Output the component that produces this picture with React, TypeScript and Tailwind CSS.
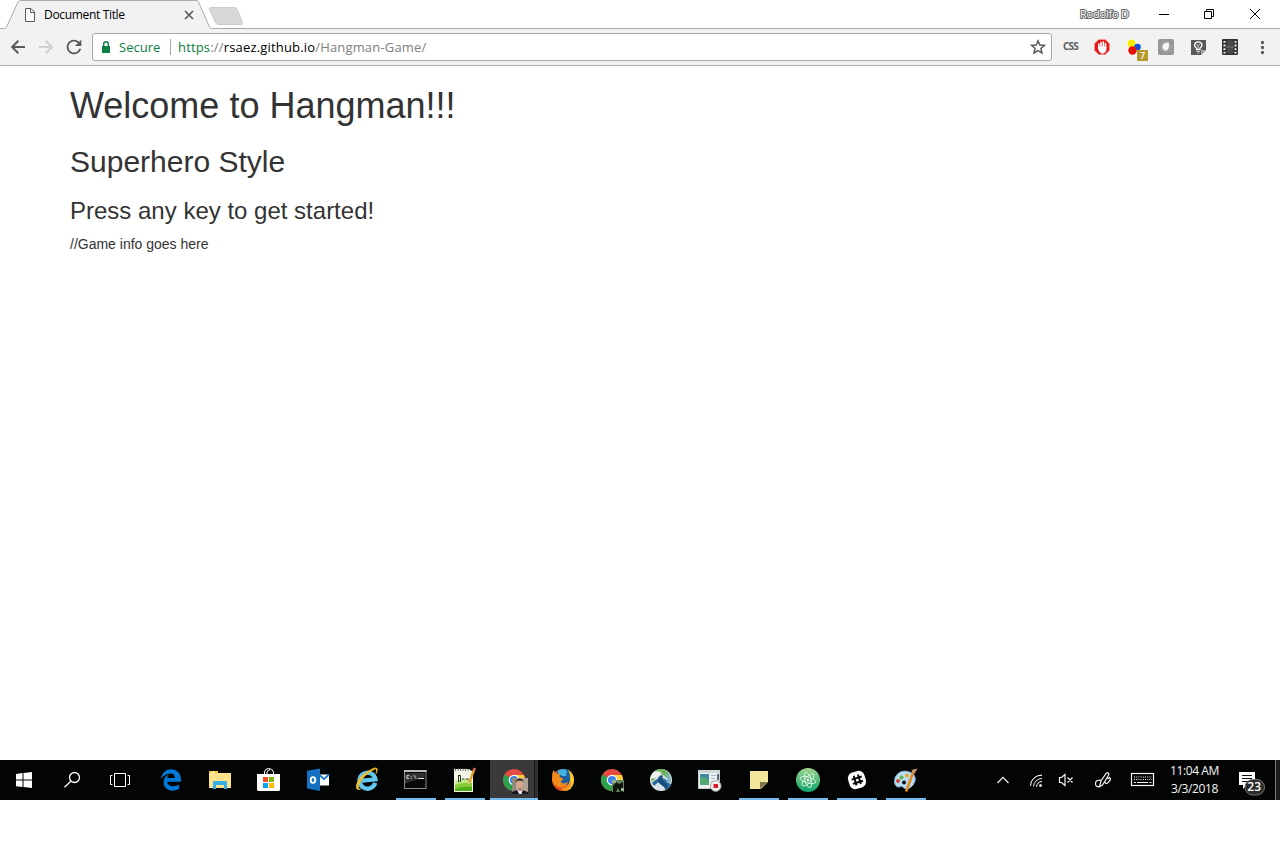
import type { ReactNode } from "react";
import { FaEdgeLegacy } from "react-icons/fa";
import { MdRefresh, MdMoreVert } from "react-icons/md";

function TitleBar() {
  return (
    <header className="relative flex h-[29px] items-center bg-white">
      <svg className="absolute left-0 top-0" width="1280" height="29" viewBox="0 0 1280 29">
        <path d="M0 28.5H4.5Q6 28.2 7 26L17.5 3Q18.5 .5 20.5 .5H196Q198 .5 199 3L209 26Q210 28.500 211.500 28.500H1280V30H0Z" fill="#f2f2f2" stroke="#a9a9a9" />
        <path d="M210.500 7.500H234.500Q236.500 7.500 237.200 9.300L242.500 22.500Q243 24.500 241 24.500H218.500Q216.500 24.500 215.500 22.500L209.500 9.500Q209 7.800 210.500 7.500Z" fill="#d8d8d8" stroke="#cacaca" />
      </svg>
      <div className="relative flex h-full w-[244px] items-center pl-6">
        <svg width="12" height="14" viewBox="0 0 12 14" fill="#fafafa" stroke="#5a5a5a">
          <path d="M1.500 .5H7L10.500 4V13.500H1.500ZM6.500 .5V4.500H10.500" />
        </svg>
        <span className="ml-2 w-[140px] whitespace-nowrap font-['Open_Sans','Noto_Sans',sans-serif] text-[12px] leading-4 tracking-[-0.33px] text-black">Document Title</span>
        <svg width="10" height="10" viewBox="0 0 10 10" stroke="#5a5a5a" strokeWidth="1.700">
          <path d="M1 1L9 9M9 1L1 9" />
        </svg>
      </div>
      <div className="relative ml-auto flex h-full items-center">
        <span className="mr-[7px] w-[67px] -translate-y-px whitespace-nowrap font-['Open_Sans','Noto_Sans',sans-serif] text-[11px] leading-4 tracking-[-0.2px] text-white [-webkit-text-stroke:2px_#666] [paint-order:stroke_fill]">Rodolfo D</span>
        <svg width="126" height="28" viewBox="1154 0 126 28" fill="none" stroke="#000">
          <path d="M1159 13.500H1169M1204.500 10.500H1211.500V17.500H1204.500ZM1206.500 10.500V8.500H1213.500V15.500H1211.500M1250 8L1260 18M1260 8L1250 18" />
        </svg>
      </div>
    </header>
  );
}

function Extensions() {
  return (
    <div className="flex h-[37px] items-center">
      <span className="w-9 pl-[11px] pb-[2px] font-['Noto_Sans','Open_Sans',sans-serif] text-[10px] leading-4 font-bold tracking-[-0.9px] text-[#606060]">CSS</span>
      <svg width="192" height="37" viewBox="1088 29 192 37">
        <path d="M1098.700 39.500H1105.300L1109.500 43.700V50.300L1105.300 54.500H1098.700L1094.500 50.300V43.700Z" fill="#e61818" stroke="#f29b9b" strokeWidth=".7" />
        <path d="M1098.800 44V47M1101 42.500V47M1103.300 42V47M1105.500 43.500V48" stroke="#fff" strokeWidth="1.600" strokeLinecap="round" />
        <path d="M1098 46.500H1106.300V50Q1106 53 1103.500 53.500H1101.500Q1099 52 1098 49Z" fill="#fff" />
        <circle cx="1131.500" cy="43.500" r="3.900" fill="#f8ed00" />
        <circle cx="1137.500" cy="47" r="3.300" fill="#1251df" />
        <circle cx="1132.500" cy="50.500" r="4.200" fill="#e91105" />
        <rect x="1137" y="50" width="11" height="11" rx="1" fill="#b5992c" />
        <text x="1139.900" y="58.800" fill="#fff" fontFamily="Noto Sans" fontWeight="500" fontSize="9">7</text>
        <defs>
          <radialGradient id="gray"><stop stopColor="#aaa" /><stop offset="1" stopColor="#969696" /></radialGradient>
        </defs>
        <rect x="1158" y="39" width="16" height="16" rx="2" fill="url(#gray)" />
        <path d="M1163 49Q1161 45 1165 43Q1167 42 1169 43Q1170 48 1166 51Z" fill="#f5f5f5" />
        <path d="M1191 40H1206V50L1201 55H1191Z" fill="#595959" />
        <path d="M1206 50H1201V55Z" fill="#aaa" />
        <path d="M1196.500 49.500V48Q1194.500 46.800 1194.500 44.500A4 4 0 0 1 1202 44.500Q1202 46.800 1200 48V49.500Z" fill="#595959" stroke="#fff" strokeWidth="1.300" />
        <path d="M1196.500 51.500H1200M1197.200 53H1199.300M1196.500 43.800L1198.200 46L1200 43.800M1198.200 46V49" stroke="#ddd" strokeWidth=".8" fill="none" />
        <rect x="1222" y="39" width="16" height="16" rx="1" fill="#333" />
        <rect x="1227" y="40.500" width="6" height="13" fill="#4b4b4b" />
        <path d="M1224.500 41V54M1235.500 41V54" stroke="#eee" strokeWidth="2" strokeDasharray="1.800 1.800" />
        <path d="M1226 47H1234" stroke="#777" />
        <MdMoreVert x="1252.500" y="37.500" size="20" color="#5a5a5a" />
      </svg>
    </div>
  );
}

function Toolbar() {
  return (
    <div className="flex h-[37px] items-center border-b border-[#b6b4b6] bg-[#f2f2f2]">
      <svg className="ml-2 size-5 text-[#5a5a5a]" viewBox="0 0 20 20" fill="none" stroke="currentColor" strokeWidth="2">
        <path d="M17 10H4.500M10.300 3.800L4.100 10L10.300 16.200" />
      </svg>
      <svg className="ml-2 size-5 text-[#d0d0d0]" viewBox="0 0 20 20" fill="none" stroke="currentColor" strokeWidth="2">
        <path d="M3 10H15.500M9.700 3.800L15.900 10L9.700 16.200" />
      </svg>
      <MdRefresh className="ml-[7px] size-[22px] text-[#5a5a5a]" />
      <div className="ml-[7px] flex h-7 w-[960px] items-center rounded-[3px] border border-[#a9a9a9] bg-white font-['Open_Sans','Noto_Sans',sans-serif] text-[13px] leading-5">
        <svg className="ml-2" width="10" height="14" viewBox="0 0 10 14">
          <path d="M1 6H9V13H1Z" fill="#0b8043" />
          <path d="M2.700 6V4Q2.700 1.700 5 1.700Q7.300 1.700 7.300 4V6" fill="none" stroke="#0b8043" strokeWidth="1.400" />
        </svg>
        <span className="ml-2 w-[51px] text-[#0b8043]">Secure</span>
        <span className="h-4 w-px bg-[#a9a9a9]" />
        <span className="ml-[7px] whitespace-nowrap tracking-[0.17px] text-black">
          <span className="text-[#0b8043]">https</span><span className="text-[#808080]">://</span>rsaez.github.io<span className="text-[#808080]">/Hangman-Game/</span>
        </span>
        <svg className="ml-auto mr-[4px] size-[18px]" viewBox="0 0 18 18" fill="none" stroke="#5a5a5a" strokeWidth="1.500">
          <path d="M9 2.800L10.800 7L15.400 7.400L11.900 10.400L13 14.900L9 12.500L5 14.900L6.100 10.400L2.600 7.400L7.200 7Z" />
        </svg>
      </div>
      <Extensions />
    </div>
  );
}

function ChromeLogo() {
  return (
    <g>
      <circle cx="24" cy="20" r="11" fill="#e34b3f" />
      <path d="M24 20L14.500 14.500A11 11 0 0 0 24 31L29 23Z" fill="#2ba14b" />
      <path d="M24 15H33.800A11 11 0 0 1 24 31L29 22Z" fill="#fbd13b" />
      <circle cx="24" cy="20" r="5.300" fill="#fff" />
      <circle cx="24" cy="20" r="4.100" fill="#4285e8" />
    </g>
  );
}

type App = { name: string; open?: boolean; active?: boolean; art: ReactNode };

const apps: App[] = [
  { name: "edge", art: <FaEdgeLegacy x="13" y="9" size="22" color="#0078d7" /> },
  {
    name: "explorer",
    art: (
      <g>
        <path d="M13 11H21L22 13H35V28H13Z" fill="#ffe28c" />
        <path d="M13 11H22V13H13Z" fill="#f7c51e" />
        <path d="M15 11.500H19V13H15Z" fill="#fff1bc" />
        <path d="M17 29V22Q17 21 18 21H30Q31 21 31 22V29H28V25H20V29Z" fill="#35afe5" />
      </g>
    ),
  },
  {
    name: "store",
    art: (
      <g>
        <path d="M12 14H35V30L34 31H13L12 30Z" fill="#fff" />
        <path d="M19.500 14V12Q20 8.500 23.500 8.500Q27.500 8.500 28.500 12V14M22 14V12Q22.500 10 25 9.500" fill="none" stroke="#fff" strokeWidth="1" />
        <path d="M18 17H23V22H18Z" fill="#f25022" />
        <path d="M24 17H29V22H24Z" fill="#7fba00" />
        <path d="M18 23H23V28H18Z" fill="#00a4ef" />
        <path d="M24 23H29V28H24Z" fill="#ffb900" />
      </g>
    ),
  },
  {
    name: "outlook",
    art: (
      <g>
        <path d="M26 14.500H35V25.500H26Z" fill="#fff" />
        <path d="M26 15.500L30 19L35 14.500" fill="none" stroke="#1976c4" strokeWidth="1.700" />
        <path d="M13 10.700L26 8.500V31L13 28.500Z" fill="#1670c2" />
        <ellipse cx="19" cy="20" rx="2.300" ry="2.900" fill="none" stroke="#fff" strokeWidth="1.900" />
      </g>
    ),
  },
  {
    name: "ie",
    art: (
      <g>
        <path d="M31 22.500A8 8 0 1 1 31.500 19H18" fill="none" stroke="#60c7f1" strokeWidth="4.300" transform="translate(1 1) rotate(-5 24 20)" />
        <path d="M33 13.500Q35 10 34 8.500Q32 6.500 24 12Q15 18 13.500 25Q12.500 31 17.500 29Q14 30 16 24Q20 16 29 10.500Q33 8 33.500 9Q34 10 33 13.500Z" fill="#f7c52c" stroke="#efb725" strokeWidth=".8" />
      </g>
    ),
  },
  {
    name: "terminal",
    open: true,
    art: (
      <g>
        <rect x="12.500" y="10.500" width="21.500" height="18" fill="#080808" stroke="#8c8c8c" />
        <path d="M12 10H34.500V12H12Z" fill="#bcbcbc" />
        <path d="M13 13H34V17Q24 19 13 24Z" fill="#303030" />
        <text x="14" y="18.500" fill="#eee" fontFamily="Liberation Mono" fontWeight="bold" fontSize="6">C:\</text>
        <path d="M26 18.500H32" stroke="#ddd" />
      </g>
    ),
  },
  {
    name: "editor",
    open: true,
    art: (
      <g>
        <path d="M13 9H28L32 12V32H13Z" fill="#f3f6e9" />
        <path d="M14 21Q22 18 31 19V31H14Z" fill="#c5e889" />
        <path d="M14 25Q22 22 31 23V31H14Z" fill="#83cc38" />
        <path d="M14 29Q23 26 31 27V31H14Z" fill="#4faf18" />
        <path d="M14.500 8.500V11M17 8.500V11M19.500 8.500V11M22 8.500V11M24.500 8.500V11M27 9V11" stroke="#777" />
        <path d="M17.500 15V22.500M17.500 15.500H19.500V22M21 19H23.500M25 19H27.500" stroke="#24331f" fill="none" />
        <path d="M33 10L28 23" stroke="#e0a02a" strokeWidth="2.400" />
        <path d="M33.800 8L33 10.500" stroke="#d8664d" strokeWidth="2.600" />
        <path d="M27 22L27.200 25L29 23Z" fill="#eed3a1" />
      </g>
    ),
  },
  {
    name: "chrome",
    open: true,
    active: true,
    art: (
      <g>
        <ChromeLogo />
        <rect x="22" y="18" width="16" height="16" fill="#b0a294" />
        <path d="M22 18H26V34H22Z" fill="#94887a" />
        <ellipse cx="29.700" cy="24" rx="3.500" ry="5" fill="#d3a68b" />
        <path d="M26 23Q25 18.500 30 18.500Q34 19 33.300 23L32.500 20.800H27Z" fill="#372b25" />
        <path d="M28 28H32V31H28Z" fill="#b98570" />
        <path d="M22 34V32L27 30L30 34L32 30L38 32V34Z" fill="#17191d" />
        <path d="M27 29L29 31H31L33 29L31.500 34H29Z" fill="#eee" />
      </g>
    ),
  },
  {
    name: "firefox",
    art: (
      <g>
        <circle cx="24" cy="20" r="11" fill="#e8641b" />
        <path d="M18 11Q24 7 30 10L32 15L31 24L24 26L18 20Z" fill="#1b5f9f" />
        <path d="M19 10.500Q25 8 28 11L27 16H23L19 13Z" fill="#45b3df" />
        <path d="M29 9.500Q35.500 14 35 21Q34 31 24 31Q30 28 31 21Q32 15 29 9.500Z" fill="#fbc928" />
        <path d="M14.500 10L17.500 14Q20 13 21 14Q20 17 21.500 17.500L25 19L22.500 20.500L22 22.500Q25 24.500 29 22Q27 27 22 27Q16 27 13.500 21Q12.300 15 14.500 10Z" fill="#f58a1c" />
        <path d="M13.500 22Q17 28 23 29Q28 29 31 25Q29 31 22.500 30.800Q16 29.500 13.500 22Z" fill="#dc4318" />
        <path d="M22 29Q29 28 31 21Q35 26 28.500 30Q25 31.500 22 29Z" fill="#f3981f" />
      </g>
    ),
  },
  {
    name: "chrome-profile",
    art: (
      <g>
        <ChromeLogo />
        <rect x="24" y="20" width="12" height="12" fill="#66825d" />
        <path d="M25 32V26L28 22L31 24L35 22V32H32L30 28L28 32Z" fill="#101510" />
        <path d="M24 20H28V23H24ZM33 28H36V31H33Z" fill="#9caf91" />
      </g>
    ),
  },
  {
    name: "vpn",
    art: (
      <g>
        <circle cx="24" cy="20" r="11" fill="#dce3e8" />
        <path d="M18 11Q25 7 30 11.500Q34 15 34 22Q28 16 23 13L15 22L13.500 17Q20 12 18 11Z" fill="#6bb15a" />
        <path d="M17 12Q21 10 25 13L18 18L13.300 19Q13.500 15 17 12Z" fill="#eef2f3" />
        <path d="M15 23Q20 18 25 18Q30 19 34.500 25L32 28Q29 22 26 21Q22 21 17 26Z" fill="#2a6ba0" />
        <path d="M24 15Q18 19 23 24Q27 26 28.500 30L31.500 28Q31 23 27 21Q24 20 26 16Z" fill="#174f83" />
        <path d="M28 14Q32 18 29 22L33 24Q35 20 32 15Z" fill="#7eb8cf" />
      </g>
    ),
  },
  {
    name: "recorder",
    art: (
      <g>
        <rect x="12.500" y="10.500" width="21" height="18" fill="#edf1f2" stroke="#c2cace" />
        <path d="M12 10H34V13H12Z" fill="#cdd6d9" />
        <path d="M14 14H23V25H14Z" fill="#4288a0" />
        <path d="M14 18Q19 15 23 22V25H14Z" fill="#55a874" />
        <path d="M25 15.500H30M25 18.500H29M25 21.500H28" stroke="#aab4b9" />
        <path d="M31 14H33V20H31Z" fill="#546e7d" />
        <circle cx="29.700" cy="26" r="5.300" fill="#ededed" stroke="#aaa" />
        <rect x="27.500" y="24" width="4.500" height="4" fill="#dc1828" />
      </g>
    ),
  },
  {
    name: "notes",
    open: true,
    art: (
      <g>
        <path d="M15 11H33V22L26 29H15Z" fill="#f3e79b" />
        <path d="M25 22H33L25 29Z" fill="#7e774d" />
      </g>
    ),
  },
  {
    name: "atom",
    open: true,
    art: (
      <g>
        <defs><linearGradient id="atom" x2="0" y2="1"><stop stopColor="#9ed48e" /><stop offset="1" stopColor="#0da36c" /></linearGradient></defs>
        <circle cx="24" cy="20" r="12" fill="url(#atom)" />
        <g fill="none" stroke="#d9f4df" strokeWidth=".9">
          <ellipse cx="24" cy="20" rx="3" ry="8" transform="rotate(-15 24 20)" />
          <ellipse cx="24" cy="20" rx="3" ry="8" transform="rotate(45 24 20)" />
          <ellipse cx="24" cy="20" rx="3" ry="8" transform="rotate(105 24 20)" />
        </g>
        <circle cx="24" cy="20" r="1.200" fill="#fff" />
      </g>
    ),
  },
  {
    name: "slack",
    open: true,
    art: (
      <g transform="rotate(-17 24 20)">
        <rect x="15.500" y="11.500" width="17" height="17" rx="6" fill="#fff" />
        <path d="M22 15V25M26.500 15V25M19 18H29.500M19 22.500H29.500" stroke="#050505" strokeWidth="1.900" />
      </g>
    ),
  },
  {
    name: "paint",
    open: true,
    art: (
      <g>
        <path d="M16 13.500Q22 9 30 13Q36 18 31 25Q26 31 22 28Q20 25 17 27Q13 27 12.500 22Q12 17 16 13.500Z" fill="#b6ddf2" stroke="#7fadd0" />
        <circle cx="22" cy="22.500" r="2" fill="#0b1521" />
        <circle cx="16" cy="21" r="2" fill="#d9443e" />
        <circle cx="19.500" cy="17.500" r="2.100" fill="#64b24d" />
        <circle cx="25" cy="15.500" r="2" fill="#e9a82c" />
        <path d="M31 13L24 31.500" stroke="#e38b25" strokeWidth="2.600" />
        <path d="M29.500 10L35.500 8.500L33 13L31 15Z" fill="#c69465" />
      </g>
    ),
  },
];

function Taskbar() {
  return (
    <footer className="flex h-10 w-full bg-[#030504]">
      <svg width="48" height="40" viewBox="0 0 48 40" fill="#fff">
        <path d="M16 14L22.500 13V19.500H16ZM23.500 12.900L32 12V19.500H23.500ZM16 20.500H22.500V27L16 26.200ZM23.500 20.500H32V28L23.500 27.100Z" />
      </svg>
      <svg width="48" height="40" viewBox="0 0 48 40" fill="none" stroke="#fff" strokeWidth="1.300">
        <circle cx="26.500" cy="17.500" r="5" /><path d="M22.800 21.200L16.500 27.300" />
      </svg>
      <svg className="mr-[3px]" width="48" height="40" viewBox="0 0 48 40" fill="none" stroke="#fff">
        <path d="M18.500 13.500H29.500V26.500H18.500ZM16.500 15.500H14.500V24.500H16.500M31.500 15.500H33.500V24.500H31.500" />
      </svg>
      {apps.map((app) => (
        <div key={app.name} className={app.active ? "flex w-[49px] flex-col bg-[linear-gradient(90deg,#3a3a3a_44px,#151515_44px,#151515_45px,#303030_45px,#303030_48px,#030504_48px)]" : "flex w-[49px] flex-col"}>
          <svg className="h-[38px] w-12 overflow-visible" viewBox="0 0 48 38">{app.art}</svg>
          {app.open && <span className={app.active ? "h-0.5 w-12 bg-[#76b9ed]" : "ml-1 h-0.5 w-10 bg-[#76b9ed]"} />}
        </div>
      ))}
      <div className="ml-auto flex text-[#f5f5f5]">
        <svg width="174" height="40" viewBox="988 0 174 40" fill="none" stroke="currentColor" strokeWidth="1.200">
          <path d="M997.500 23L1003 17.300L1008.500 23" />
          <g strokeWidth="1">
            <path d="M1030.500 26A11 11 0 0 1 1042 15.200M1033.500 26.500A8.500 8.500 0 0 1 1042 18.500M1036.500 27A5.500 5.500 0 0 1 1042 21.500" />
            <path d="M1030.500 23Q1034 15 1042 15" opacity=".5" />
            <circle cx="1040.500" cy="25.500" r="1" fill="currentColor" />
          </g>
          <path d="M1059.500 17.500H1061.500L1065 14.500V25.500L1061.500 22.500H1059.500ZM1067.500 17.500L1072.500 22.500M1072.500 17.500L1067.500 22.500" />
          <path d="M1101 21L1106 13.500Q1108.500 11.500 1109 14.500L1102.500 25L1099.500 26.500ZM1101 20Q1095 20 1095.500 24Q1096 28 1100 26M1105 22Q1106 25 1108 22.500Q1112 19 1109.500 17.500L1107.500 19" />
          <rect x="1131.500" y="13.500" width="22" height="12" />
          <path d="M1134 17H1152M1134 19.500H1152" strokeDasharray="1 1.200" />
          <path d="M1134 22.500H1136M1137 22.500H1148M1149.500 22.500H1151.500" />
        </svg>
        <div className="flex w-[66px] flex-col items-center pt-[2px] pr-px font-['Open_Sans','Noto_Sans',sans-serif] text-[12px] leading-[18px] tracking-[-0.4px] whitespace-nowrap">
          <span>11:04 AM</span>
          <span>3/3/2018</span>
        </div>
        <svg width="47" height="40" viewBox="0 0 47 40">
          <path d="M11 12H27V25H19L15 29V25H11Z" fill="#fff" />
          <path d="M14 15.500H24M14 18.500H24M14 21.500H21" stroke="#111" />
          <rect x="17" y="19.500" width="19.500" height="15.500" rx="7.700" fill="#2b2d2c" stroke="#767676" />
          <text x="26.200" y="31" textAnchor="middle" fill="#fff" fontFamily="Open Sans" fontWeight="600" fontSize="12">23</text>
        </svg>
        <div className="w-[5px] border-l border-[#777] bg-[#1b1b1b]" />
      </div>
    </footer>
  );
}

export default function App() {
  return (
    <div className="flex h-[859px] w-[1280px] flex-col overflow-hidden bg-white">
      <TitleBar />
      <Toolbar />
      <main className="h-[694px] px-[70px] pt-5 font-['Liberation_Sans',Arial,sans-serif] text-[#333]">
        <h1 className="text-[36px] leading-[39px] font-medium">Welcome to Hangman!!!</h1>
        <h2 className="mt-[21px] text-[30px] leading-8 font-medium">Superhero Style</h2>
        <h3 className="mt-5 text-[24px] leading-[26px] font-medium">Press any key to get started!</h3>
        <p className="mt-[10px] text-[14px] leading-5">//Game info goes here</p>
      </main>
      <Taskbar />
    </div>
  );
}
